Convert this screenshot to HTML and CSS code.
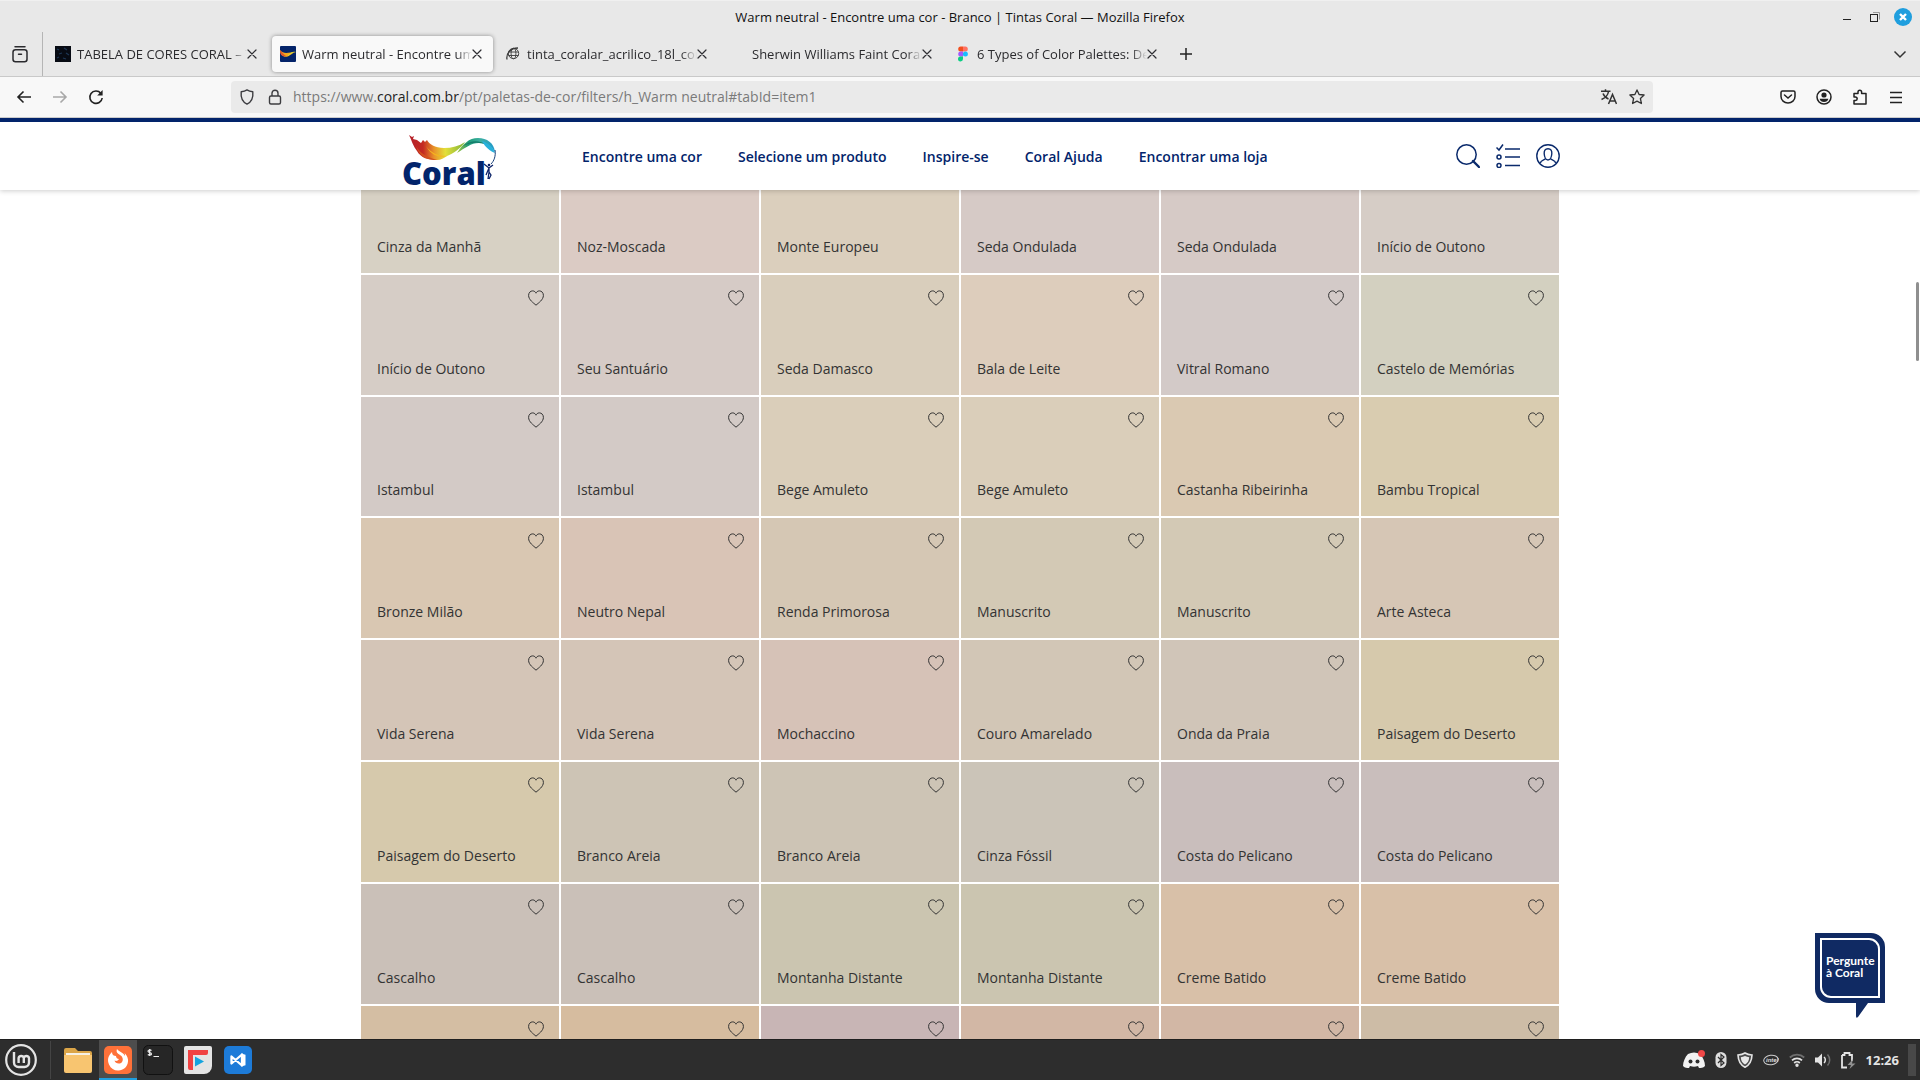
FILE: index.html
```html
<!DOCTYPE html>
<html lang="pt-BR">
<head>
<meta charset="utf-8">
<meta name="viewport" content="width=device-width, initial-scale=1">
<title>Warm neutral - Encontre uma cor - Branco | Tintas Coral</title>
<link rel="stylesheet" href="styles.css">
</head>
<body>
<svg class="sprite" aria-hidden="true">
  <symbol id="heart" viewBox="0 0 16 16"><path d="M8 15.2 C5.6 13 .6 9.8 .6 5.4 C.6 2.6 2.5 .9 4.6 .9 C6.4 .9 7.5 1.9 8 3.2 C8.500 1.900 9.600 .9 11.400 .9 C13.500 .9 15.400 2.600 15.400 5.400 C15.400 9.800 10.400 13 8 15.200 Z" fill="none" stroke="#333" stroke-width="1" stroke-linejoin="round"/></symbol>
  <symbol id="close" viewBox="0 0 10 10"><path d="M1 1 9 9 M9 1 1 9" fill="none" stroke="#2e2e33" stroke-width="1.200" stroke-linecap="round"/></symbol>
</svg>

<header class="titlebar">
  <div class="title">Warm neutral - Encontre uma cor - Branco | Tintas Coral — Mozilla Firefox</div>
  <div class="window-buttons">
    <button aria-label="Minimizar"><svg width="18" height="18"><path d="M5 11.500h8" stroke="#222"/></svg></button>
    <button aria-label="Restaurar"><svg width="18" height="18"><path d="M7 4.500h6.500v7" fill="none" stroke="#999"/><rect x="4.500" y="6.500" width="7" height="7" fill="none" stroke="#222"/></svg></button>
    <button aria-label="Fechar"><svg width="18" height="18"><circle cx="9" cy="9" r="9" fill="#1f9ede"/><path d="M6 6l6 6M12 6l-6 6" stroke="#fff" stroke-width="2.400"/></svg></button>
  </div>
</header>

<div class="tabbar">
  <button class="tab-view" aria-label="Visão geral"><svg width="18" height="18" viewBox="0 0 18 18" fill="none" stroke="#2a2a2e" stroke-width="1.500" stroke-linecap="round"><path d="M4 1.800h10"/><rect x="2" y="4.700" width="14" height="12" rx="2.500"/><path d="M7.500 9.200h3"/></svg></button>
  <div class="tabs">
    <div class="tab"><svg class="favicon" viewBox="0 0 16 16"><rect width="16" height="16" fill="#070b13"/><path d="M2 3l2 1M9 2l3 2M4 8l3-1M11 7l3 2M2 12l2-1M8 12l3 1" stroke="#1d3654" stroke-width="1.300"/></svg><span class="tab-name">TABELA DE CORES CORAL – Tintas</span><button class="tab-close" aria-label="Fechar aba"><svg width="10" height="10"><use href="#close"/></svg></button></div>
    <div class="tab active"><svg class="favicon" viewBox="0 0 16 16"><rect width="16" height="16" rx="1" fill="#04246a"/><path d="M0 4C4 9 9 6 16 6C11 7 8 13 3 10C1 9 0 6 0 4Z" fill="#f3a81c"/><path d="M0 4C2 6 3 8 6 10C2 11 0 9 0 4Z" fill="#e2582c"/><path d="M8 9C11 6 13 5 16 6C13 6 11 8 8 10Z" fill="#d8dc3a"/></svg><span class="tab-name">Warm neutral - Encontre uma cor</span><button class="tab-close" aria-label="Fechar aba"><svg width="10" height="10"><use href="#close"/></svg></button></div>
    <div class="tab"><svg class="favicon" viewBox="0 0 16 16" fill="none" stroke="#3a3a3a" stroke-width=".9"><circle cx="8.500" cy="7.500" r="5.200"/><ellipse cx="8.500" cy="7.500" rx="2.400" ry="5.200"/><path d="M3.500 6h10M3.500 9.500h10"/><path d="M2 13.500C1 8 5 2 13 2" stroke-width="1.300"/></svg><span class="tab-name">tinta_coralar_acrilico_18l_coral</span><button class="tab-close" aria-label="Fechar aba"><svg width="10" height="10"><use href="#close"/></svg></button></div>
    <div class="tab"><span class="favicon"></span><span class="tab-name">Sherwin Williams Faint Coral Palette</span><button class="tab-close" aria-label="Fechar aba"><svg width="10" height="10"><use href="#close"/></svg></button></div>
    <div class="tab"><svg class="favicon" viewBox="0 0 16 16"><path d="M8 .5H5.700a2.500 2.500 0 0 0 0 5H8Z" fill="#f24e1e"/><path d="M8 .5h2.300a2.500 2.500 0 0 1 0 5H8Z" fill="#ff7262"/><path d="M8 5.500H5.700a2.500 2.500 0 0 0 0 5H8Z" fill="#a259ff"/><circle cx="10.400" cy="8" r="2.500" fill="#1abcfe"/><path d="M8 10.500H5.700A2.500 2.500 0 1 0 8 13Z" fill="#0acf83"/></svg><span class="tab-name">6 Types of Color Palettes: Definition</span><button class="tab-close" aria-label="Fechar aba"><svg width="10" height="10"><use href="#close"/></svg></button></div>
    <button class="new-tab" aria-label="Nova aba"><svg width="14" height="14"><path d="M7 1v12M1 7h12" stroke="#222" stroke-width="1.500"/></svg></button>
  </div>
  <button class="all-tabs" aria-label="Listar abas"><svg width="16" height="16"><path d="M2.500 5.500 8 11l5.500-5.500" fill="none" stroke="#333" stroke-width="1.500"/></svg></button>
</div>

<div class="toolbar">
  <div class="history">
    <button aria-label="Voltar"><svg width="16" height="16" fill="none" stroke="#222" stroke-width="1.600"><path d="M15 8H2M7.500 2.500 2 8l5.500 5.500"/></svg></button>
    <button aria-label="Avançar" disabled><svg width="16" height="16" fill="none" stroke="#a8a8a8" stroke-width="1.600"><path d="M1 8h13M8.500 2.500 14 8l-5.500 5.500"/></svg></button>
    <button aria-label="Recarregar"><svg width="16" height="16"><path d="M12.800 4.200A6.200 6.200 0 1 0 14.200 9" fill="none" stroke="#222" stroke-width="1.600"/><path d="M14.600 1v5.500H9.200Z" fill="#222"/></svg></button>
  </div>
  <div class="urlbar">
    <svg class="url-icon" viewBox="0 0 16 16" fill="none" stroke="#3c3c40" stroke-width="1.400"><path d="M8 .9c1.800 1.200 3.900 1.700 5.800 1.900.6 5.500-1 9.900-5.800 12.300C3.200 12.700 1.600 8.300 2.200 2.800 4.100 2.600 6.200 2.100 8 .9Z" stroke-linejoin="round"/></svg>
    <svg class="url-icon" viewBox="0 0 16 16" fill="none" stroke="#3c3c40" stroke-width="1.400"><rect x="2.500" y="7" width="11" height="8" rx="1.500"/><path d="M5 7V4.200a3 3 0 0 1 6 0V7"/></svg>
    <a class="url" href="#tabId=item1">https://www.<b>coral.com.br</b>/pt/paletas-de-cor/filters/h_Warm neutral#tabId=item1</a>
    <svg class="url-icon" viewBox="0 0 16 16" fill="none" stroke="#333" stroke-width="1.500"><path d="M0 2.300h9.500M4.500.3v2M7.500 2.500C7 6 4 9 .5 10.500M2 4.500C3 7 5 9 7.500 10"/><path d="M7.500 15 11.500 5.500 15.500 15M9 12h5"/></svg>
    <svg class="url-icon" viewBox="0 0 16 16" fill="none" stroke="#333" stroke-width="1.300" stroke-linejoin="round"><path d="M8 .9l2.100 4.600 5 .5-3.700 3.500 1 5L8 12.100l-4.400 2.400 1-5L.9 6l5-.5Z"/></svg>
  </div>
  <div class="tools">
    <button aria-label="Pocket"><svg width="16" height="16" fill="none" stroke="#222" stroke-width="1.500"><path d="M2.500 2h11a1.500 1.500 0 0 1 1.500 1.500V7.500a7 6.500 0 0 1-14 0V3.500A1.500 1.500 0 0 1 2.500 2Z"/><path d="M4.500 6 8 9l3.500-3" stroke-linecap="round"/></svg></button>
    <button aria-label="Conta"><svg width="16" height="16"><circle cx="8" cy="8" r="7" fill="none" stroke="#222" stroke-width="1.500"/><circle cx="8" cy="6" r="2.600" fill="#222"/><path d="M3.600 9.800h8.800a4.600 4.600 0 0 1-8.800 0Z" fill="#222"/></svg></button>
    <button aria-label="Extensões"><svg width="16" height="16" fill="none" stroke="#222" stroke-width="1.500" stroke-linejoin="round"><path d="M2 4.500h4V3a1.800 1.800 0 0 1 3.600 0v1.500H14V15H2v-3.500h1.500a1.700 1.700 0 0 0 0-3.400H2Z"/></svg></button>
    <button aria-label="Menu"><svg width="14" height="14"><path d="M1 2.500h12M1 7.500h12M1 12.500h12" stroke="#222" stroke-width="1.500"/></svg></button>
  </div>
</div>

<div class="viewport">
  <header class="site-header">
    <div class="site-bar">
      <a class="logo" href="#inicio" aria-label="Coral">
        <svg width="98" height="56" viewBox="0 0 98 56">
          <defs>
            <linearGradient id="warm" x1="0" x2="1" y1="0" y2="0"><stop offset="0" stop-color="#b3202b"/><stop offset=".25" stop-color="#c42a22"/><stop offset=".45" stop-color="#e9942a"/><stop offset=".65" stop-color="#e3df3a"/><stop offset="1" stop-color="#7fb539"/></linearGradient>
            <linearGradient id="cool" x1="0" x2="1" y1="0" y2="0"><stop offset="0" stop-color="#a8c93c"/><stop offset=".3" stop-color="#1d9a77"/><stop offset=".6" stop-color="#3dafa0"/><stop offset="1" stop-color="#2199cd"/></linearGradient>
          </defs>
          <text class="logo-word" x="1" y="53">Coral</text>
          <path d="M8 3l3 2 2-1-1 3 4 1 4 3 2-3 2 2 2-2c2 4 8 8 17 8 8 0 15-2 21-6-4 6-12 12-18 14-3 2-6 4-10 4-9 0-16-2-20-9C12 14 11 9 8 3Z" fill="url(#warm)"/>
          <path d="M15 14c4 7 10 11 21 14-9 0-17-2-21-14Z" fill="#d2501f"/>
          <path d="M25 14c5 7 12 10 21 10-5 2-15 1-21-10Z" fill="#f4b51f"/>
          <path d="M56 21C62 12 68 6 77 6c9 0 16 5 17 14-4-6-9-9-16-9-8 0-14 5-22 10Z" fill="url(#cool)"/>
          <path d="M62 14C70 8 78 8 86 13c-8-3-14-3-24 1Z" fill="#147d6a"/>
          <path d="M81 9c6 2 11 6 13 12-5-2-10-6-13-12Z" fill="#27b1dc"/>
          <path d="M94 18c1 6-1 11-4 14" fill="none" stroke="#173f79"/>
          <circle cx="88" cy="33" r="1.300" fill="#0a2268"/>
          <path d="M83 32l5 4 4-3M88 36v4l-1 7M88 40l2 3-2 4M88 36l-3 7" fill="none" stroke="#0a2268" stroke-width="1.300"/>
        </svg>
      </a>
      <nav class="site-nav">
        <a href="#cor">Encontre uma cor</a>
        <a href="#produto">Selecione um produto</a>
        <a href="#inspire">Inspire-se</a>
        <a href="#ajuda">Coral Ajuda</a>
        <a href="#loja">Encontrar uma loja</a>
      </nav>
      <div class="site-actions">
        <button aria-label="Buscar"><svg width="24" height="24" fill="none" stroke="#0a2a6c"><circle cx="10.500" cy="10.500" r="9.700" stroke-width="1.500"/><path d="M17 17l6 6" stroke-width="2.400" stroke-linecap="round"/></svg></button>
        <button aria-label="Minhas listas"><svg width="24" height="24" fill="none" stroke="#0a2a6c" stroke-width="1.500"><path d="M9 5h15M9 13h15M9 21.500h15"/><path d="M.5 3.500 3 6 7 .5"/><circle cx="3" cy="13" r="2"/><circle cx="3" cy="21.500" r="2"/></svg></button>
        <button aria-label="Minha conta"><svg width="24" height="24" fill="none" stroke="#0a2a6c" stroke-width="1.400"><circle cx="12" cy="12" r="11.200"/><path d="M12 4.700c3 0 4 2 3.800 5-.2 3-1.600 6.300-3.800 6.300s-3.600-3.300-3.800-6.300c-.2-3 .8-5 3.800-5Z"/><path d="M9.500 14.500c-.5 1.500-4.800 1.500-5.300 4.800M14.500 14.500c.5 1.500 4.800 1.500 5.300 4.800"/></svg></button>
      </div>
    </div>
  </header>

  <main class="swatches">
    <article class="swatch" style="background:#d7d1c4"><button aria-label="Favoritar"><svg><use href="#heart"/></svg></button><a href="#c">Cinza da Manhã</a></article>
    <article class="swatch" style="background:#dbcbc4"><button aria-label="Favoritar"><svg><use href="#heart"/></svg></button><a href="#c">Noz-Moscada</a></article>
    <article class="swatch" style="background:#dbcfbd"><button aria-label="Favoritar"><svg><use href="#heart"/></svg></button><a href="#c">Monte Europeu</a></article>
    <article class="swatch" style="background:#d6cac6"><button aria-label="Favoritar"><svg><use href="#heart"/></svg></button><a href="#c">Seda Ondulada</a></article>
    <article class="swatch" style="background:#d6cac6"><button aria-label="Favoritar"><svg><use href="#heart"/></svg></button><a href="#c">Seda Ondulada</a></article>
    <article class="swatch" style="background:#d6cdc6"><button aria-label="Favoritar"><svg><use href="#heart"/></svg></button><a href="#c">Início de Outono</a></article>

    <article class="swatch" style="background:#d6cdc6"><button aria-label="Favoritar"><svg><use href="#heart"/></svg></button><a href="#c">Início de Outono</a></article>
    <article class="swatch" style="background:#d6cbc6"><button aria-label="Favoritar"><svg><use href="#heart"/></svg></button><a href="#c">Seu Santuário</a></article>
    <article class="swatch" style="background:#d9cebc"><button aria-label="Favoritar"><svg><use href="#heart"/></svg></button><a href="#c">Seda Damasco</a></article>
    <article class="swatch" style="background:#ddcdbc"><button aria-label="Favoritar"><svg><use href="#heart"/></svg></button><a href="#c">Bala de Leite</a></article>
    <article class="swatch" style="background:#d3cac8"><button aria-label="Favoritar"><svg><use href="#heart"/></svg></button><a href="#c">Vitral Romano</a></article>
    <article class="swatch" style="background:#d3d0c0"><button aria-label="Favoritar"><svg><use href="#heart"/></svg></button><a href="#c">Castelo de Memórias</a></article>

    <article class="swatch" style="background:#d3cac6"><button aria-label="Favoritar"><svg><use href="#heart"/></svg></button><a href="#c">Istambul</a></article>
    <article class="swatch" style="background:#d3cac6"><button aria-label="Favoritar"><svg><use href="#heart"/></svg></button><a href="#c">Istambul</a></article>
    <article class="swatch" style="background:#daceba"><button aria-label="Favoritar"><svg><use href="#heart"/></svg></button><a href="#c">Bege Amuleto</a></article>
    <article class="swatch" style="background:#daceba"><button aria-label="Favoritar"><svg><use href="#heart"/></svg></button><a href="#c">Bege Amuleto</a></article>
    <article class="swatch" style="background:#dac9b2"><button aria-label="Favoritar"><svg><use href="#heart"/></svg></button><a href="#c">Castanha Ribeirinha</a></article>
    <article class="swatch" style="background:#d9ccb0"><button aria-label="Favoritar"><svg><use href="#heart"/></svg></button><a href="#c">Bambu Tropical</a></article>

    <article class="swatch" style="background:#d9c7b2"><button aria-label="Favoritar"><svg><use href="#heart"/></svg></button><a href="#c">Bronze Milão</a></article>
    <article class="swatch" style="background:#d9c4b6"><button aria-label="Favoritar"><svg><use href="#heart"/></svg></button><a href="#c">Neutro Nepal</a></article>
    <article class="swatch" style="background:#d5c7b4"><button aria-label="Favoritar"><svg><use href="#heart"/></svg></button><a href="#c">Renda Primorosa</a></article>
    <article class="swatch" style="background:#d3c9b5"><button aria-label="Favoritar"><svg><use href="#heart"/></svg></button><a href="#c">Manuscrito</a></article>
    <article class="swatch" style="background:#d3c9b5"><button aria-label="Favoritar"><svg><use href="#heart"/></svg></button><a href="#c">Manuscrito</a></article>
    <article class="swatch" style="background:#d6c6b5"><button aria-label="Favoritar"><svg><use href="#heart"/></svg></button><a href="#c">Arte Asteca</a></article>

    <article class="swatch" style="background:#d4c5b7"><button aria-label="Favoritar"><svg><use href="#heart"/></svg></button><a href="#c">Vida Serena</a></article>
    <article class="swatch" style="background:#d4c5b7"><button aria-label="Favoritar"><svg><use href="#heart"/></svg></button><a href="#c">Vida Serena</a></article>
    <article class="swatch" style="background:#d6c2b7"><button aria-label="Favoritar"><svg><use href="#heart"/></svg></button><a href="#c">Mochaccino</a></article>
    <article class="swatch" style="background:#d2c6b6"><button aria-label="Favoritar"><svg><use href="#heart"/></svg></button><a href="#c">Couro Amarelado</a></article>
    <article class="swatch" style="background:#d0c5b8"><button aria-label="Favoritar"><svg><use href="#heart"/></svg></button><a href="#c">Onda da Praia</a></article>
    <article class="swatch" style="background:#d6c9ac"><button aria-label="Favoritar"><svg><use href="#heart"/></svg></button><a href="#c">Paisagem do Deserto</a></article>

    <article class="swatch" style="background:#d6c9ac"><button aria-label="Favoritar"><svg><use href="#heart"/></svg></button><a href="#c">Paisagem do Deserto</a></article>
    <article class="swatch" style="background:#cdc4b5"><button aria-label="Favoritar"><svg><use href="#heart"/></svg></button><a href="#c">Branco Areia</a></article>
    <article class="swatch" style="background:#cdc4b5"><button aria-label="Favoritar"><svg><use href="#heart"/></svg></button><a href="#c">Branco Areia</a></article>
    <article class="swatch" style="background:#cbc4b8"><button aria-label="Favoritar"><svg><use href="#heart"/></svg></button><a href="#c">Cinza Fóssil</a></article>
    <article class="swatch" style="background:#c9bebc"><button aria-label="Favoritar"><svg><use href="#heart"/></svg></button><a href="#c">Costa do Pelicano</a></article>
    <article class="swatch" style="background:#c9bebc"><button aria-label="Favoritar"><svg><use href="#heart"/></svg></button><a href="#c">Costa do Pelicano</a></article>

    <article class="swatch" style="background:#cac0b8"><button aria-label="Favoritar"><svg><use href="#heart"/></svg></button><a href="#c">Cascalho</a></article>
    <article class="swatch" style="background:#cac0b8"><button aria-label="Favoritar"><svg><use href="#heart"/></svg></button><a href="#c">Cascalho</a></article>
    <article class="swatch" style="background:#cbc5b0"><button aria-label="Favoritar"><svg><use href="#heart"/></svg></button><a href="#c">Montanha Distante</a></article>
    <article class="swatch" style="background:#cbc5b0"><button aria-label="Favoritar"><svg><use href="#heart"/></svg></button><a href="#c">Montanha Distante</a></article>
    <article class="swatch" style="background:#d8c0a8"><button aria-label="Favoritar"><svg><use href="#heart"/></svg></button><a href="#c">Creme Batido</a></article>
    <article class="swatch" style="background:#d8c0a8"><button aria-label="Favoritar"><svg><use href="#heart"/></svg></button><a href="#c">Creme Batido</a></article>

    <article class="swatch" style="background:#d4bea3"><button aria-label="Favoritar"><svg><use href="#heart"/></svg></button></article>
    <article class="swatch" style="background:#d6bc9f"><button aria-label="Favoritar"><svg><use href="#heart"/></svg></button></article>
    <article class="swatch" style="background:#c8b5b5"><button aria-label="Favoritar"><svg><use href="#heart"/></svg></button></article>
    <article class="swatch" style="background:#d2b7a5"><button aria-label="Favoritar"><svg><use href="#heart"/></svg></button></article>
    <article class="swatch" style="background:#d2b7a5"><button aria-label="Favoritar"><svg><use href="#heart"/></svg></button></article>
    <article class="swatch" style="background:#cdbca6"><button aria-label="Favoritar"><svg><use href="#heart"/></svg></button></article>
  </main>

  <div class="scroll-thumb"></div>
  <button class="ask">
    <svg width="72" height="88" viewBox="0 0 72 88"><path d="M1 1h56a14 14 0 0 1 14 14v56H54L44 85q-2 2-2-1V71H15A14 14 0 0 1 1 57Z" fill="#102a63"/><path d="M7 7h48a10 10 0 0 1 10 10v48H17A10 10 0 0 1 7 55Z" fill="none" stroke="#fff" stroke-width="2"/></svg>
    <span>Pergunte<br>à Coral</span>
  </button>
</div>

<footer class="taskbar">
  <button class="start" aria-label="Menu"><svg width="32" height="32" fill="none" stroke="#e4e4e4"><circle cx="16" cy="16" r="14.800" stroke-width="2.200"/><path d="M9 8v10.500a4.500 4.500 0 0 0 4.500 4.500h6a4.500 4.500 0 0 0 4.500-4.500V14a2.700 2.700 0 0 0-5.200 0v5M18.800 14a2.700 2.700 0 0 0-5.200 0v5" stroke-width="2.400"/></svg></button>
  <div class="apps">
    <button aria-label="Arquivos"><svg width="28" height="28"><path d="M0 4a2 2 0 0 1 2-2h9l3 3h12a2 2 0 0 1 2 2v8H0Z" fill="#dba548"/><path d="M2 7h24v4H2Z" fill="#f6f1e6"/><path d="M0 9h28v16a2 2 0 0 1-2 2H2a2 2 0 0 1-2-2Z" fill="#f8c570"/></svg></button>
    <button class="running" aria-label="Firefox"><svg width="28" height="28"><rect width="28" height="28" rx="5" fill="#ff7139"/><path d="M13 3c-1 3 0 4 3 6 3 1.500 4 6 1 8-2.500 1.500-6 0-6.500-2.500 1.500 1 3.500.5 4.500-1.500-1.500 0-3-1-3-3C10 10 8 9 8 6 4 10 3 14 5 18.500 7 23 11 25 15 24.500c6-.5 9.500-5.500 9-11-.3-3-2-5-3.500-6.500.5 1 .7 2 .5 3-1.500-3.500-6-4-8-7Z" fill="#fff"/></svg></button>
    <button aria-label="Terminal"><svg width="30" height="30"><rect x=".5" y=".5" width="29" height="29" rx="5" fill="#262626" stroke="#111"/><path d="M8.500 5.500C7 4.500 5 5 5 6.300c0 1.700 3.500.8 3.500 2.600 0 1.300-2.500 1.500-3.700.6M6.700 4v7M10.500 11.500h5.500" fill="none" stroke="#eee" stroke-width="1.200"/></svg></button>
    <button aria-label="FreeTube"><svg width="28" height="28"><path d="M2 0h24a2 2 0 0 1 2 2v18a8 8 0 0 1-8 8H2a2 2 0 0 1-2-2V2a2 2 0 0 1 2-2Z" fill="#e4e4e4"/><path d="M4 4h20v3a2 2 0 0 1-2 2H9v15H6a2 2 0 0 1-2-2Z" fill="#f04242"/><path d="M11 10.500 20 15.500 11 20.500Z" fill="#14a4df"/></svg></button>
    <button aria-label="Visual Studio Code"><svg width="28" height="28"><rect width="28" height="28" rx="5" fill="#1d7bd8"/><path d="M18 8.500 7.500 17.500V10.500L18 19.500Z" fill="none" stroke="#fff" stroke-width="2.300" stroke-linejoin="round"/><path d="M17 7.500l4.500 1.200v10.600L17 20.500Z" fill="#fff"/></svg></button>
  </div>
  <div class="tray">
    <svg width="22" height="20" viewBox="0 0 22 20"><path d="M5 4c4-2 8-2 12 0 3 3 5 8 5 12-2 2-4 2-6 2l-1-2c-3 1-5 1-8 0l-1 2c-2 0-4 0-6-2C0 12 2 7 5 4Z" fill="#f2f2f2"/><circle cx="7.500" cy="11.500" r="2" fill="#2d2d2d"/><circle cx="14.500" cy="11.500" r="2" fill="#2d2d2d"/><circle cx="18.500" cy="3.500" r="3.500" fill="#f04747"/></svg>
    <svg width="12" height="18" viewBox="0 0 12 18"><rect x=".5" y="1" width="11" height="16" rx="5.500" fill="#dedede"/><path d="M3 6l6 6-3 2.500v-11L9 6l-6 6" fill="none" stroke="#2d2d2d" stroke-width="1.200"/></svg>
    <svg width="16" height="16" viewBox="0 0 16 16"><path d="M8 1c2 1.300 4.500 1.900 7 2-.2 6-2 9.800-7 12.200C3 12.800 1.200 9 1 3c2.500-.1 5-.7 7-2Z" fill="#4a4a4a" stroke="#e4e4e4" stroke-width="1.600"/><path d="M8 4c1.400.7 2.800 1 4.200 1.200C12 8.800 10.700 11 8 12.500 5.300 11 4 8.800 3.800 5.200 5.200 5 6.600 4.700 8 4Z" fill="#e8e8e8"/></svg>
    <svg width="16" height="12" viewBox="0 0 16 12"><ellipse cx="8" cy="6" rx="7.300" ry="4.700" fill="none" stroke="#cfcfcf" transform="rotate(-8 8 6)"/><text class="chip" x="3" y="8">intel</text></svg>
    <svg width="16" height="14" viewBox="0 0 16 14" fill="none" stroke="#e4e4e4" stroke-width="1.800"><path d="M.8 4.500a10.500 10.500 0 0 1 14.400 0" stroke="#6f6f6f"/><path d="M3 7.300a7.300 7.300 0 0 1 10 0M5.200 10a4 4 0 0 1 5.600 0"/><circle cx="8" cy="12.300" r=".8"/></svg>
    <svg width="16" height="14" viewBox="0 0 16 14" fill="none" stroke="#e4e4e4" stroke-width="1.500"><path d="M0 4.500h3L7 .5v13L3 9.500H0Z" fill="#e4e4e4" stroke="none"/><path d="M9 4a4 4 0 0 1 0 6"/><path d="M12.500 1.500a8 8 0 0 1 0 11" stroke="#6f6f6f"/></svg>
    <svg width="15" height="17" viewBox="0 0 15 17"><path d="M1 3h2.500V1h5v2H11v6M6 15.500H1V3" fill="none" stroke="#e4e4e4" stroke-width="1.800"/><path d="M12 7 6.500 13H10l-1.500 4L14.500 11.500H11Z" fill="#8f8f8f"/></svg>
  </div>
  <time class="clock">12:26</time>
  <button class="show-desktop" aria-label="Mostrar área de trabalho"></button>
</footer>
</body>
</html>
```
FILE: styles.css
```css
* { box-sizing: border-box; }

body {
  margin: 0;
  height: 100vh;
  display: flex;
  flex-direction: column;
  overflow: hidden;
  background: #fff;
  font-family: "Open Sans", "Noto Sans", sans-serif;
  font-size: 14px;
  line-height: 20px;
  color: #333;
}

button {
  display: flex;
  align-items: center;
  justify-content: center;
  padding: 0;
  border: 0;
  background: none;
  font: inherit;
  color: inherit;
}

a { color: inherit; text-decoration: none; }
svg { display: block; flex: none; }
.sprite { position: absolute; width: 0; height: 0; }

/* Window frame */
.titlebar {
  flex: none;
  display: grid;
  grid-template-columns: 1fr auto 1fr;
  align-items: center;
  height: 32px;
  padding-right: 8px;
  padding-left: 8px;
  background: #e8e8e8;
  border-top: 1px solid #f0f0f0;
}
.title {
  grid-column: 2;
  font-family: "Open Sans", sans-serif;
  font-size: 13px;
  color: #111;
}
.window-buttons { display: flex; justify-content: flex-end; gap: 10px; }

.tabbar {
  flex: none;
  display: flex;
  align-items: center;
  height: 45px;
  background: #e8e8e8;
  border-bottom: 1px solid #c9c9c9;
}
.tab-view {
  width: 43px;
  height: 44px;
  padding-right: 12px;
  padding-left: 10px;
  border-right: 1px solid #b5b5b5;
}
.tabs { flex: 1; display: flex; gap: 4px; padding-left: 4px; }
.tab {
  display: flex;
  align-items: center;
  width: 221px;
  height: 36px;
  padding: 0 11px 0 8px;
  border-radius: 4px;
  font-family: "Open Sans", sans-serif;
  font-size: 13px;
  color: #2b2b2e;
}
.tab.active { background: #f9f9f9; box-shadow: 0 0 4px rgba(0, 0, 0, .4); }
.favicon { flex: none; width: 16px; height: 16px; }
.tab-name {
  flex: 1;
  min-width: 0;
  margin-left: 6px;
  overflow: hidden;
  white-space: nowrap;
  mask-image: linear-gradient(to left, transparent, #000 16px);
}
.tab-close { width: 10px; height: 20px; }
.new-tab { width: 36px; height: 36px; margin-left: -4px; }
.all-tabs { width: 40px; height: 36px; }

.toolbar {
  flex: none;
  display: flex;
  align-items: center;
  height: 41px;
  padding: 0 6px;
  background: #f8f8f8;
  border-bottom: 1px solid #ccc;
}
.history, .tools { flex: 1; display: flex; }
.tools { justify-content: flex-end; }
.history button, .tools button { width: 36px; height: 32px; }
.urlbar {
  flex: 0 1 1422px;
  display: flex;
  align-items: center;
  gap: 12px;
  height: 32px;
  margin: 0 36px 0 0;
  padding: 0 8px;
  border-radius: 4px;
  background: #eaeaea;
}
.url-icon { width: 16px; height: 16px; }
.url {
  flex: 1;
  min-width: 0;
  margin-left: -2px;
  overflow: hidden;
  white-space: nowrap;
  font-family: "Open Sans", sans-serif;
  color: #7a7a7a;
}
.url b { font-weight: 400; color: #222; }

/* Site */
.viewport { position: relative; flex: 1; min-height: 0; overflow: hidden; }
.site-header {
  position: relative;
  z-index: 1;
  height: 72px;
  border-top: 4px solid #02246b;
  background: #fff;
  box-shadow: 0 1px 5px rgba(0, 0, 0, .2);
}
.site-bar {
  display: flex;
  align-items: center;
  max-width: 1200px;
  height: 68px;
  margin: 0 auto;
  padding-left: 41px;
}
.logo { margin-top: 8px; }
.logo-word { font: 800 31px "Open Sans", sans-serif; fill: #02246b; }
.site-nav {
  flex: 1;
  display: flex;
  gap: 36px;
  margin-left: 83px;
  padding-top: 2px;
  font-weight: 600;
  color: #02246b;
  white-space: nowrap;
}
.site-actions { display: flex; gap: 16px; }

.swatches {
  display: grid;
  grid-template-columns: repeat(6, 1fr);
  gap: 2px;
  max-width: 1200px;
  margin: -37px auto 0;
  padding: 0 1px;
}
.swatch {
  display: flex;
  flex-direction: column;
  justify-content: space-between;
  aspect-ratio: 38 / 23;
  padding: 15px 15px 16px 16px;
}
.swatch button { align-self: flex-end; width: 16px; height: 16px; }
.swatch svg { width: 16px; height: 16px; }

.scroll-thumb {
  position: absolute;
  top: 164px;
  right: 1px;
  width: 3px;
  height: 79px;
  border-radius: 2px;
  background: #8f8f8f;
}
.ask { position: absolute; right: 34px; bottom: 19px; }
.ask span {
  position: absolute;
  top: 23px;
  left: 12px;
  font-family: Lato, sans-serif;
  font-size: 12px;
  font-weight: 700;
  line-height: 12px;
  text-align: left;
  color: #fff;
}

/* Desktop panel */
.taskbar {
  flex: none;
  display: flex;
  align-items: center;
  height: 41px;
  padding: 0 4px 0 5px;
  border-top: 1px solid #1f1f1f;
  background: #2d2d2d;
}
.start { width: 46px; height: 38px; justify-content: flex-start; border-right: 1px solid #444; }
.apps { flex: 1; display: flex; gap: 2px; padding-left: 8px; }
.apps button { width: 38px; height: 40px; }
.apps .running { background: #4d4d4d; box-shadow: inset 0 -2px #1f9ede; }
.tray { display: flex; align-items: center; gap: 10px; }
.chip { font: italic 700 6px "Liberation Sans", sans-serif; fill: #ddd; }
.clock {
  margin-left: 10px;
  font-family: "Open Sans", sans-serif;
  font-size: 13px;
  font-weight: 700;
  color: #e4e4e4;
}
.show-desktop { width: 8px; height: 32px; margin-left: 9px; background: #484848; }
```
